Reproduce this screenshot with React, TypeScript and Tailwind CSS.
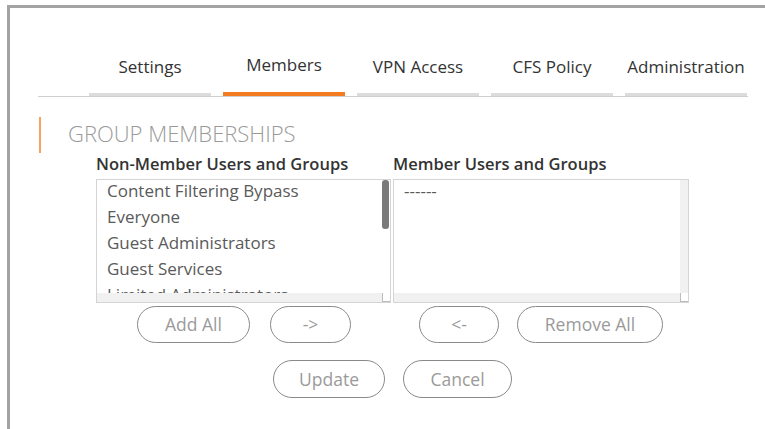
import React from "react";

const tabs = ["Settings", "Members", "VPN Access", "CFS Policy", "Administration"];

const nonMembers = [
  "Content Filtering Bypass",
  "Everyone",
  "Guest Administrators",
  "Guest Services",
  "Limited Administrators",
];

const PillButton: React.FC<{ label: string; className?: string }> = ({ label, className = "" }) => (
  <button
    className={`rounded-full border border-[#8a8a8a] bg-white text-[17.5px] text-[#9a9a9a] ${className}`}
  >
    {label}
  </button>
);

const ListBox: React.FC<{ items: string[]; withThumb?: boolean }> = ({ items, withThumb }) => (
  <div className="flex h-[124px] flex-col border border-[#d4d4d4] bg-white">
    <div className="flex min-h-0 flex-1">
      <div className="flex-1 overflow-hidden pl-[10px] text-[17px] text-[#5a5a5a]">
        {items.map((it) => (
          <div key={it} className="h-[26px] leading-[22px] whitespace-nowrap">
            {it}
          </div>
        ))}
      </div>
      <div className={`w-[8px] ${withThumb ? "bg-white" : "bg-[#f1f1f1]"}`}>
        {withThumb && <div className="h-[49px] w-[7px] rounded-[3px] bg-[#7a7a7a]" />}
      </div>
    </div>
    <div className="flex h-[9px]">
      <div className="flex-1 bg-[#f1f1f1]" />
      <div className="w-[8px] border-b border-l border-[#bdbdbd] bg-white" />
    </div>
  </div>
);

export default function App() {
  return (
    <div
      className="h-[429px] w-[765px] overflow-hidden bg-white pl-[7px] pt-[5px]"
      style={{ fontFamily: '"Open Sans", "Liberation Sans", sans-serif' }}
    >
      <div className="h-[430px] border-l-[3px] border-t-[3px] border-[#a3a3a3]">
        {/* tab strip */}
        <div className="ml-[28px] mt-[42px] w-[710px] border-b border-[#cfcfcf]">
          <div className="flex gap-[12px] pl-[51px]">
            {tabs.map((t) => {
              const active = t === "Members";
              return (
                <div
                  key={t}
                  className={`w-[122px] whitespace-nowrap text-center text-[17px] font-medium leading-[24px] text-[#333] ${
                    active
                      ? "border-b-4 border-[#f47b20] pb-[14px] pt-[3px]"
                      : "border-b-[3px] border-[#dcdcdc] pb-[14px] pt-[5px]"
                  }`}
                >
                  {t}
                </div>
              );
            })}
          </div>
        </div>

        {/* section heading */}
        <div className="ml-[29px] mt-[20px] h-[36px] border-l-2 border-[#f8a25c] pl-[27px] pt-[2px] text-[22px] font-light leading-[28px] text-[#9a9a9a]">
          GROUP MEMBERSHIPS
        </div>

        <div className="ml-[86px] w-[593px]">
          <div className="grid grid-cols-[295px_296px] gap-[2px]">
            <div>
              <div className="mb-[5px] mt-px whitespace-nowrap text-[16.5px] font-semibold leading-[20px] text-[#333]">
                Non-Member Users and Groups
              </div>
              <ListBox items={nonMembers} withThumb />
              <div className="mt-[3px] flex gap-[20px] pl-[41px]">
                <PillButton label="Add All" className="h-[37px] w-[113px]" />
                <PillButton label="->" className="h-[37px] w-[81px]" />
              </div>
            </div>
            <div>
              <div className="mb-[5px] mt-px whitespace-nowrap text-[16.5px] font-semibold leading-[20px] text-[#333]">
                Member Users and Groups
              </div>
              <ListBox items={["------"]} />
              <div className="mt-[3px] flex gap-[18px] pl-[26px]">
                <PillButton label="<-" className="h-[37px] w-[80px]" />
                <PillButton label="Remove All" className="h-[37px] w-[146px]" />
              </div>
            </div>
          </div>

          <div className="mt-[17px] flex justify-center gap-[18px]">
            <PillButton label="Update" className="h-[38px] w-[112px]" />
            <PillButton label="Cancel" className="h-[38px] w-[109px]" />
          </div>
        </div>
      </div>
    </div>
  );
}
